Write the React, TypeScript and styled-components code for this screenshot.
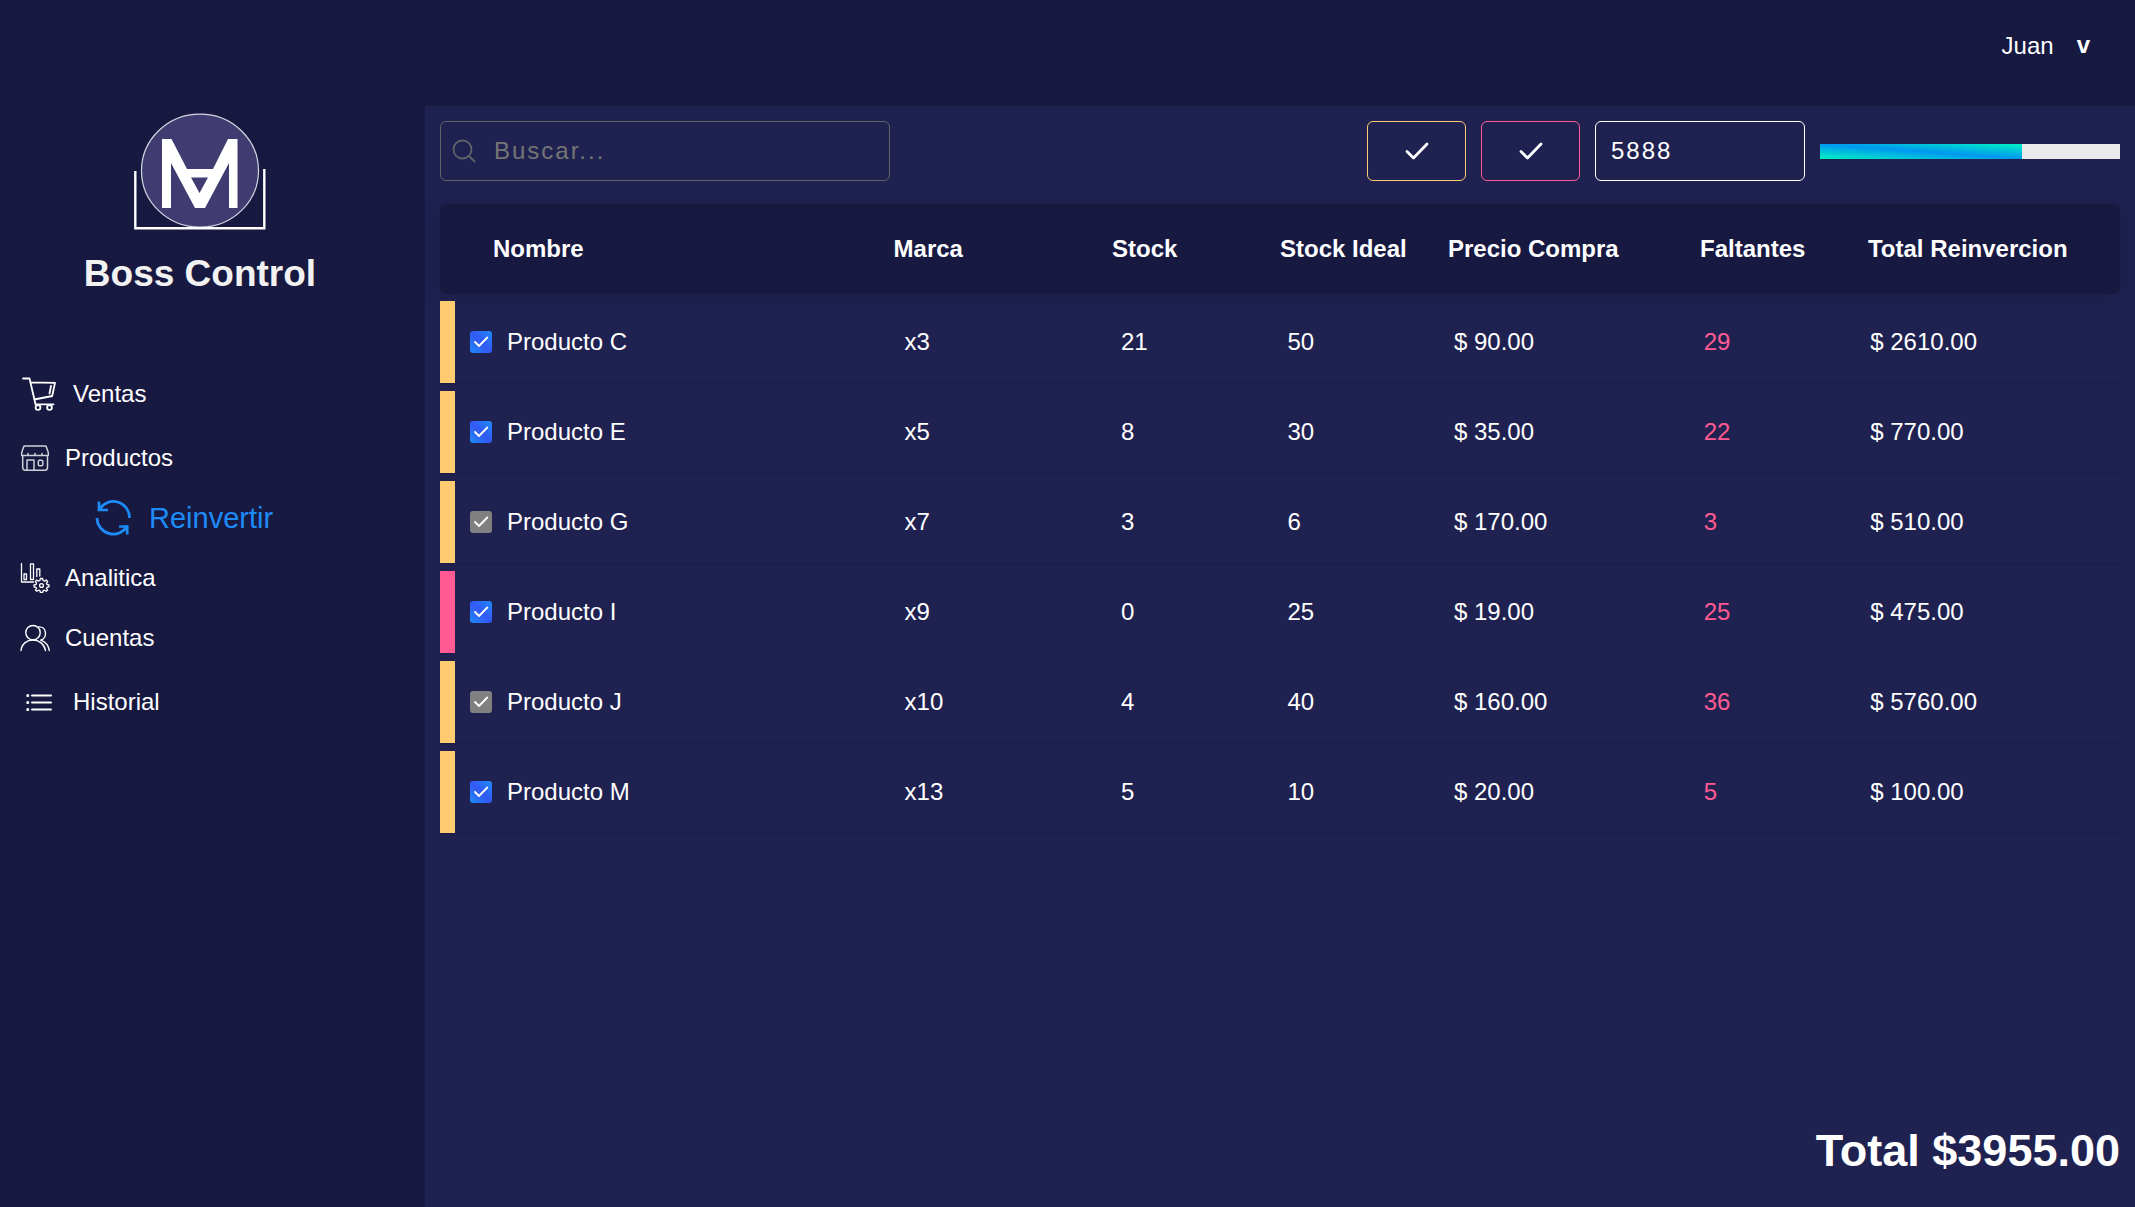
import React, { useState } from "react";
import styled, { createGlobalStyle } from "styled-components";

const color = {
  dark: "#171941",
  panel: "#1f2251",
  text: "#ffffff",
  blue: "#1d8cf8",
  indigo: "#3358f4",
  pink: "#ff5b92",
  yellow: "#ffcb70",
  muted: "#5f6368",
};

const GlobalStyle = createGlobalStyle`
  *, *::before, *::after { box-sizing: border-box; }
  body {
    margin: 0;
    background: ${color.dark};
    color: ${color.text};
    font-family: "Liberation Sans", Arial, sans-serif;
    font-size: 24px;
    line-height: 28px;
  }
  button, input { font: inherit; color: inherit; }
`;

const Shell = styled.div`
  display: flex;
  gap: 25px;
  min-height: 100vh;
`;

const Sidebar = styled.aside`
  flex: 0 0 400px;
  padding-top: 112px;
`;

const Brand = styled.div`
  display: flex;
  flex-direction: column;
  align-items: center;
  gap: 20px;
  margin-bottom: 64px;
`;

const BrandName = styled.h1`
  margin: 0;
  font-size: 37px;
  line-height: 44px;
  color: #f2f2f2;
`;

const Menu = styled.nav`
  display: flex;
  flex-direction: column;
`;

const MenuLink = styled.a<{ $large?: boolean }>`
  display: flex;
  align-items: center;
  gap: 13px;
  height: ${(p) => (p.$large ? 68 : 60)}px;
  padding-left: 18px;
  color: ${color.text};
  text-decoration: none;
`;

const SubLink = styled(MenuLink)`
  gap: 18px;
  padding-left: 95px;
  font-size: 29px;
  line-height: 34px;
  color: ${color.blue};
`;

const IconBox = styled.span<{ $size: number }>`
  display: flex;
  align-items: center;
  justify-content: center;
  width: ${(p) => p.$size}px;
`;

const Content = styled.div`
  flex: 1;
  min-width: 0;
  display: flex;
  flex-direction: column;
`;

const TopBar = styled.header`
  display: flex;
  align-items: center;
  justify-content: flex-end;
  height: 106px;
  padding: 0 45px 14px 0;
`;

const UserButton = styled.button`
  display: flex;
  align-items: center;
  gap: 23px;
  padding: 0;
  border: 0;
  background: none;
  cursor: pointer;
`;

const Caret = styled.span`
  font-weight: bold;
  line-height: 24px;
  padding-bottom: 2px;
`;

const Main = styled.main`
  flex: 1;
  display: flex;
  flex-direction: column;
  padding: 15px 15px 30px;
  background: ${color.panel};
`;

const Toolbar = styled.div`
  display: flex;
  align-items: center;
  gap: 15px;
  margin-bottom: 23px;
`;

const SearchBox = styled.label`
  display: flex;
  align-items: center;
  gap: 18px;
  width: 450px;
  height: 60px;
  margin-right: auto;
  padding: 0 11px;
  border: 1px solid ${color.muted};
  border-radius: 6px;
  color: ${color.muted};
`;

const SearchInput = styled.input`
  flex: 1;
  min-width: 0;
  padding: 0;
  border: 0;
  outline: 0;
  background: none;
  color: ${color.text};
  letter-spacing: 2px;
  &::placeholder { color: #757575; }
`;

const FilterButton = styled.button<{ $tone: string }>`
  display: flex;
  align-items: center;
  justify-content: center;
  width: 99px;
  height: 60px;
  padding: 0;
  border: 1px solid ${(p) => p.$tone};
  border-radius: 6px;
  background: none;
  cursor: pointer;
`;

const BudgetInput = styled.input`
  width: 210px;
  height: 60px;
  padding: 0 15px;
  border: 1px solid ${color.text};
  border-radius: 6px;
  outline: 0;
  background: none;
  letter-spacing: 2px;
`;

const Progress = styled.progress`
  appearance: none;
  width: 300px;
  height: 15px;
  border: 0;
  &::-webkit-progress-bar { background: #eaeaea; }
  &::-webkit-progress-value {
    background: linear-gradient(to top right, #00f2c3, #0098f0, #00f2c3);
  }
`;

const Table = styled.table`
  display: block;
`;

const Head = styled.thead`
  display: block;
  margin-bottom: 7px;
  border-radius: 6px;
  background: ${color.dark};
  box-shadow: 0 1px 20px rgba(0, 0, 0, 0.15);
`;

const Body = styled.tbody`
  display: flex;
  flex-direction: column;
  gap: 8px;
`;

const columns = `
  display: grid;
  grid-template-columns: 27% 13% 10% 10% 15% 10% 15%;
  align-items: center;
`;

const HeadRow = styled.tr`
  ${columns}
  height: 90px;
`;

const HeadCell = styled.th<{ $first?: boolean }>`
  padding: 0 0 0 ${(p) => (p.$first ? 53 : 0)}px;
  text-align: left;
  white-space: nowrap;
`;

const Row = styled.tr<{ $tone: string }>`
  ${columns}
  height: 82px;
  border-left: 15px solid ${(p) => p.$tone};
  box-shadow: 0 1px 1px rgba(0, 0, 0, 0.1);
`;

const Cell = styled.td<{ $tone?: string }>`
  padding: 0;
  color: ${(p) => p.$tone ?? color.text};
`;

const ProductLabel = styled.label`
  display: flex;
  align-items: center;
  gap: 15px;
  padding-left: 15px;
`;

const CheckFrame = styled.span`
  display: grid;
  width: 22px;
  height: 22px;
  & > * { grid-area: 1 / 1; }
  & > svg { pointer-events: none; }
`;

const CheckInput = styled.input`
  appearance: none;
  width: 22px;
  height: 22px;
  margin: 0;
  border-radius: 3px;
  background: #808080;
  &:enabled:checked {
    background: linear-gradient(to bottom left, ${color.blue}, ${color.indigo}, ${color.blue});
  }
`;

const Total = styled.p`
  margin: auto 0 0;
  font-size: 45px;
  line-height: 52px;
  font-weight: bold;
  text-align: right;
`;

const stroke = {
  fill: "none",
  stroke: "currentColor",
  strokeLinecap: "round",
  strokeLinejoin: "round",
} as const;

const LogoMark = () => (
  <svg width="136" height="120" viewBox="132 112 136 120" aria-hidden="true">
    <ellipse cx="200" cy="170.700" rx="58.500" ry="56.500" fill="#403c72" stroke="#d5d5e2" strokeWidth="1.200" />
    <path d="M135.300 171V228.200H264.300V169" fill="none" stroke="#fff" strokeWidth="2.400" />
    <path
      d="M162 139H171.500L187 169H213L228 139H237.500V208H229V163L205 208H195L171 163V208H162ZM191 177.500H208L199.500 193Z"
      fill="#fff"
      fillRule="evenodd"
    />
  </svg>
);

const CartIcon = () => (
  <svg width="36" height="36" viewBox="21 377 36 36" {...stroke} strokeWidth="1.800" aria-hidden="true">
    <path d="M23 379.500H29.500L35.500 405M31 383.300L55 383.800 52.200 397 34.200 400.500M35.500 405.300H53.500M51 387L49.500 394.500" />
    <circle cx="38" cy="408.500" r="2.400" />
    <circle cx="49.500" cy="408.500" r="2.400" />
  </svg>
);

const ShopIcon = () => (
  <svg width="30" height="28" viewBox="20 445 30 28" {...stroke} stroke="#d0d0d8" strokeWidth="1.500" aria-hidden="true">
    <path d="M24 447H46L48.300 453.500V456.500H21.700V453.500ZM22.700 457V468.500Q22.700 471.200 25.500 471.200H45Q47.500 471.200 47.500 468.500V457M28 454.500V456M35 454.500V456M42 454.500V456M27 471V461H34V471" />
    <rect x="38.300" y="461.300" width="4.500" height="5.500" rx="1.200" />
  </svg>
);

const RefreshIcon = () => (
  <svg width="36" height="36" viewBox="95 501 36 36" fill="none" stroke="currentColor" strokeWidth="2.700" aria-hidden="true">
    <path d="M99.300 510.500A16.200 16.200 0 0 1 129.500 519M127.500 526.500A16.200 16.200 0 0 1 97 519M99 502.500V511H108M119 527.500H127.200V535.500" />
  </svg>
);

const AnalyticsIcon = () => (
  <svg width="30" height="30" viewBox="20 564 30 30" {...stroke} strokeWidth="1.300" aria-hidden="true">
    <path d="M21.500 564.500V583H33.500M24 580.500V575H26.500V580.500ZM30.500 580.500V564.800H33.500V580.500ZM36.800 577.500V570H39.800V577" />
    <circle cx="41.500" cy="586.500" r="1.900" />
    <path d="M40.400 579.500H42.600L43.100 581.500 44.700 582.100 46.300 581 47.700 582.600 46.500 584.200 47 585.500 49 585.900V587.800L47 588.300 46.500 589.500 47.600 591.100 46.200 592.300 44.500 591.200 43.100 591.700 42.600 593.500H40.400L39.900 591.700 38.500 591.200 36.800 592.300 35.400 591.100 36.500 589.500 36 588.300 34 587.800V585.900L36 585.500 36.500 584.200 35.300 582.600 36.700 581 38.300 582.100 39.900 581.500Z" />
  </svg>
);

const AccountsIcon = () => (
  <svg width="30" height="28" viewBox="20 625 30 28" {...stroke} strokeWidth="1.400" aria-hidden="true">
    <circle cx="33" cy="633.700" r="7.200" />
    <path d="M21 651.500C22.500 637.500 43 637.500 45.500 651.500M38.700 627.900C46.800 627.200 47.800 639 40.700 641.200C45.500 643 48.500 646.500 49.300 651.500" />
  </svg>
);

const ListIcon = () => (
  <svg width="28" height="20" viewBox="25 692 28 20" {...stroke} strokeWidth="2" aria-hidden="true">
    <path d="M32 695.500H51M32 702.500H51M32 709.500H51" />
    <path d="M27.700 695.500H27.800M27.700 702.500H27.800M27.700 709.500H27.800" strokeWidth="3" />
  </svg>
);

const SearchIcon = () => (
  <svg width="24" height="24" viewBox="452 139 24 24" {...stroke} strokeWidth="1.800" aria-hidden="true">
    <circle cx="462.500" cy="149.500" r="9" />
    <path d="M469 156L474.500 161.500" />
  </svg>
);

const CheckIcon = () => (
  <svg width="26" height="20" viewBox="0 0 26 20" {...stroke} strokeWidth="2.800" aria-hidden="true">
    <path d="M3 10.500L9.500 17L23 3" />
  </svg>
);

const TickIcon = () => (
  <svg width="22" height="22" viewBox="0 0 22 22" {...stroke} strokeWidth="1.800" aria-hidden="true">
    <path d="M5 11L9 15L17.300 6.500" />
  </svg>
);

const headings = ["Nombre", "Marca", "Stock", "Stock Ideal", "Precio Compra", "Faltantes", "Total Reinvercion"];

const products = [
  { name: "Producto C", brand: "x3", stock: 21, ideal: 50, price: 90 },
  { name: "Producto E", brand: "x5", stock: 8, ideal: 30, price: 35 },
  { name: "Producto G", brand: "x7", stock: 3, ideal: 6, price: 170, off: true },
  { name: "Producto I", brand: "x9", stock: 0, ideal: 25, price: 19 },
  { name: "Producto J", brand: "x10", stock: 4, ideal: 40, price: 160, off: true },
  { name: "Producto M", brand: "x13", stock: 5, ideal: 10, price: 20 },
];

export default function App() {
  const [budget, setBudget] = useState("5888");
  const [selected, setSelected] = useState(() => products.map(() => true));

  const total = products.reduce(
    (sum, p, i) => (p.off || !selected[i] ? sum : sum + (p.ideal - p.stock) * p.price),
    0,
  );
  const toggle = (index: number) =>
    setSelected((list) => list.map((on, i) => (i === index ? !on : on)));

  return (
    <>
      <GlobalStyle />
      <Shell>
        <Sidebar>
          <Brand>
            <LogoMark />
            <BrandName>Boss Control</BrandName>
          </Brand>
          <Menu>
            <MenuLink href="#ventas" $large>
              <IconBox $size={42}><CartIcon /></IconBox>
              Ventas
            </MenuLink>
            <MenuLink href="#productos">
              <IconBox $size={34}><ShopIcon /></IconBox>
              Productos
            </MenuLink>
            <SubLink href="#reinvertir" aria-current="page">
              <RefreshIcon />
              Reinvertir
            </SubLink>
            <MenuLink href="#analitica">
              <IconBox $size={34}><AnalyticsIcon /></IconBox>
              Analitica
            </MenuLink>
            <MenuLink href="#cuentas">
              <IconBox $size={34}><AccountsIcon /></IconBox>
              Cuentas
            </MenuLink>
            <MenuLink href="#historial" $large>
              <IconBox $size={42}><ListIcon /></IconBox>
              Historial
            </MenuLink>
          </Menu>
        </Sidebar>
        <Content>
          <TopBar>
            <UserButton type="button">
              Juan
              <Caret>v</Caret>
            </UserButton>
          </TopBar>
          <Main>
            <Toolbar>
              <SearchBox>
                <SearchIcon />
                <SearchInput type="text" placeholder="Buscar..." aria-label="Buscar" />
              </SearchBox>
              <FilterButton type="button" $tone={color.yellow} aria-label="Stock bajo">
                <CheckIcon />
              </FilterButton>
              <FilterButton type="button" $tone={color.pink} aria-label="Sin stock">
                <CheckIcon />
              </FilterButton>
              <BudgetInput
                type="text"
                inputMode="numeric"
                aria-label="Presupuesto"
                value={budget}
                onChange={(e) => setBudget(e.target.value)}
              />
              <Progress value={total} max={Number(budget) || 1} aria-label="Presupuesto usado" />
            </Toolbar>
            <Table>
              <Head>
                <HeadRow>
                  {headings.map((title, i) => (
                    <HeadCell key={title} scope="col" $first={i === 0}>{title}</HeadCell>
                  ))}
                </HeadRow>
              </Head>
              <Body>
                {products.map((p, i) => (
                  <Row key={p.name} $tone={p.stock === 0 ? color.pink : color.yellow}>
                    <Cell>
                      <ProductLabel>
                        <CheckFrame>
                          <CheckInput
                            type="checkbox"
                            checked={selected[i]}
                            disabled={p.off}
                            onChange={() => toggle(i)}
                          />
                          {selected[i] && <TickIcon />}
                        </CheckFrame>
                        {p.name}
                      </ProductLabel>
                    </Cell>
                    <Cell>{p.brand}</Cell>
                    <Cell>{p.stock}</Cell>
                    <Cell>{p.ideal}</Cell>
                    <Cell>$ {p.price.toFixed(2)}</Cell>
                    <Cell $tone={color.pink}>{p.ideal - p.stock}</Cell>
                    <Cell>$ {((p.ideal - p.stock) * p.price).toFixed(2)}</Cell>
                  </Row>
                ))}
              </Body>
            </Table>
            <Total>Total ${total.toFixed(2)}</Total>
          </Main>
        </Content>
      </Shell>
    </>
  );
}
